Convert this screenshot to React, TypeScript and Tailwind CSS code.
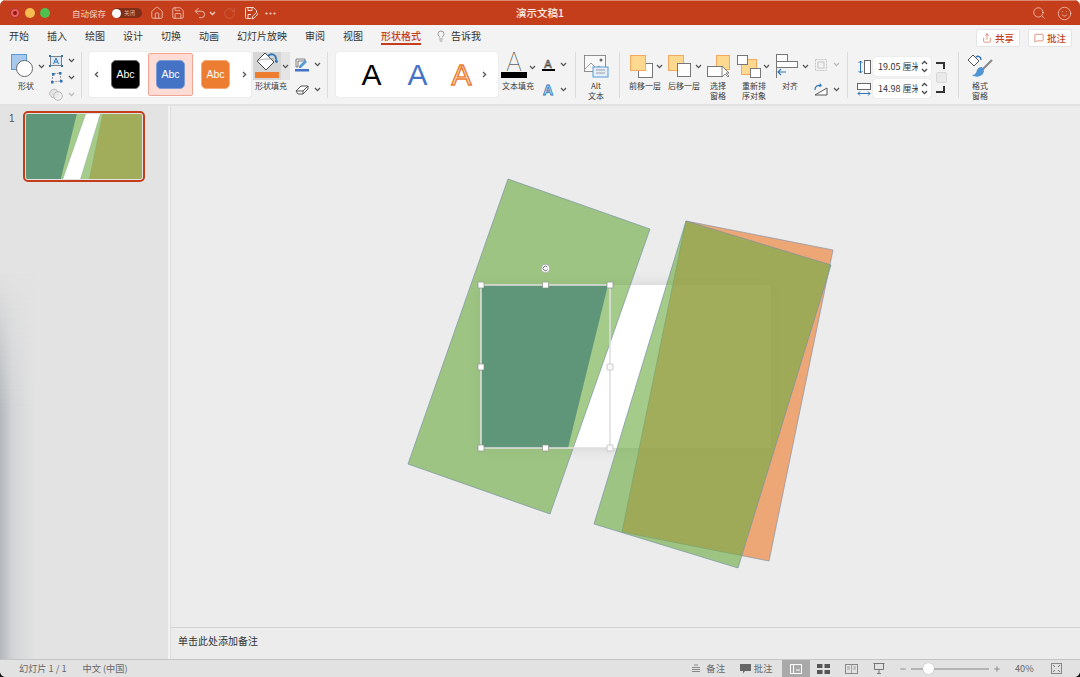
import React from "react";
import { Home, Save, Undo2, RotateCw, Search, Smile, Lightbulb, Share, MessageSquare, Plus, Minus } from "lucide-react";

const Chev = ({ c = "#555", cls = "" }: { c?: string; cls?: string }) => (
  <svg width="7" height="5" viewBox="0 0 7 5" className={"shrink-0 " + cls}><path d="M1 1l2.5 2.6L6 1" fill="none" stroke={c} strokeWidth="1.3" /></svg>
);

const SlideShapes = () => (
  <>
    <polygon points="508,179 650,229 550,514 408,464" fill="#70ad47" fillOpacity=".63" stroke="#7a94a0" strokeWidth=".7" />
    <polygon points="686,221 833,250 769,561 622,532" fill="#ed7d31" fillOpacity=".63" stroke="#8a94a8" strokeWidth=".7" />
    <polygon points="686,221 831,265 738,568 594,524" fill="#70ad47" fillOpacity=".63" stroke="#7a94a0" strokeWidth=".7" />
    <polygon points="481,285 608,285 568,448 481,448" fill="#5f9679" />
  </>
);

const Handle = ({ x, y, dim }: { x: number; y: number; dim?: boolean }) => (
  <rect x={x - 3} y={y - 3} width="6" height="6" rx=".8" fill={dim ? "#f8f8f8" : "#fff"} stroke={dim ? "#b8b8b8" : "#8a8a8a"} strokeWidth=".7" />
);

const Canvas = () => (
  <svg viewBox="171 106 909 521" className="w-full h-full">
    <defs>
      <filter id="sh" x="-10%" y="-15%" width="120%" height="130%">
        <feDropShadow dx="0" dy="0" stdDeviation="7" floodColor="#000" floodOpacity=".12" />
      </filter>
    </defs>
    <rect x="481" y="285" width="290" height="163" fill="#fff" filter="url(#sh)" />
    <SlideShapes />
    <rect x="481" y="285" width="129" height="163" fill="none" stroke="#fff" strokeWidth="1.4" />
    <rect x="481" y="285" width="129" height="163" fill="none" stroke="#9a9a9a" strokeWidth=".5" />
    <line x1="545.5" y1="272" x2="545.5" y2="285" stroke="#aaa" strokeWidth=".7" />
    <circle cx="545.5" cy="268.5" r="4.2" fill="#f4f4f4" stroke="#a8a8a8" strokeWidth=".7" />
    <path d="M547.3 267a2.3 2.3 0 1 0 .2 2.6" fill="none" stroke="#666" strokeWidth=".8" />
    <Handle x={481} y={285} /><Handle x={545.5} y={285} /><Handle x={610} y={285} />
    <Handle x={481} y={367} /><Handle x={610} y={367} dim />
    <Handle x={481} y={448} /><Handle x={545.5} y={448} /><Handle x={610} y={448} dim />
  </svg>
);

const Thumb = () => (
  <svg viewBox="481 285 290 163" preserveAspectRatio="none" className="w-full h-full rounded-[2px] bg-white">
    <SlideShapes />
  </svg>
);

const Sep = ({ cls }: { cls: string }) => <div className={"w-px h-[46px] bg-[#dcdcdc] shrink-0 " + cls} />;

const Big = ({ cls, top, lines, lc = "" }: { cls: string; top: React.ReactNode; lines: string[]; lc?: string }) => (
  <div className={"shrink-0 flex flex-col " + cls}>
    <div className="h-[29px] flex items-center pb-px">{top}</div>
    {lines.map((l) => (
      <div key={l} className={"text-[8px] leading-[10px] text-center text-[#3a3a3a] whitespace-nowrap " + lc}>{l}</div>
    ))}
  </div>
);

const Row = ({ icon, dim }: { icon: React.ReactNode; dim?: boolean }) => (
  <div className="h-[17px] flex items-center gap-[5px]">
    <div className="w-[14px] h-[14px] flex items-center justify-center">{icon}</div>
    <Chev c={dim ? "#bbb" : "#555"} />
  </div>
);

const Abc = ({ cls }: { cls: string }) => (
  <div className={"w-[29px] h-[29px] rounded-[5px] flex items-center justify-center text-[10.5px] text-white font-['Liberation_Sans',sans-serif] " + cls}>Abc</div>
);

const BoxO = ({ x, y, w, h, f = "#fdd98f", s = "#f5a860" }: { x: number; y: number; w: number; h: number; f?: string; s?: string }) => (
  <rect x={x} y={y} width={w} height={h} fill={f} stroke={s} strokeWidth="1" />
);

const Bucket = () => (
  <svg width="26" height="19" viewBox="0 0 26 19">
    <path d="M11 1l9 9-8 8-9-9z" fill="#fff" stroke="#444" strokeWidth="1" />
    <path d="M3 9c3-1 6-2 9-2h8" fill="none" stroke="#888" strokeWidth=".7" />
    <path d="M14 4c3-3 8-2 8 3" fill="none" stroke="#2e75b6" strokeWidth="1.8" />
    <path d="M22 6c1.500 2 2.500 3.500 1.500 4.500s-2.800 0-2.500-1.500z" fill="#2e75b6" />
  </svg>
);

const Field = ({ v }: { v: string }) => (
  <div className="w-[58px] h-[19px] bg-white rounded-[3px] flex items-center pl-[5px] pr-[2px] shadow-[0_0_1px_#bbb]">
    <span className="text-[9px] text-[#333] w-[40px] overflow-hidden whitespace-nowrap">{v}</span>
    <div className="ml-auto flex flex-col gap-[3px] pr-[1px]">
      <Chev cls="rotate-180" c="#444" />
      <Chev c="#444" />
    </div>
  </div>
);

export default function App() {
  return (
    <div className="w-[1080px] h-[677px] bg-[#111] rounded-t-[6px] overflow-hidden font-['Noto_Sans_CJK_SC','Noto_Sans',sans-serif]">
      <div className="w-full h-full flex flex-col rounded-b-[6px] overflow-hidden bg-[#ececec]">
        {/* title bar */}
        <div className="h-[25px] shrink-0 bg-[#c43e1c] border-t border-[#d98a70] grid grid-cols-[1fr_auto_1fr] items-center text-white">
          <div className="flex items-center pl-[10px]">
            <div className="w-[10px] h-[10px] rounded-full bg-[#ee5f5b] border border-[#a33] flex items-center justify-center"><div className="w-[4px] h-[4px] rounded-full bg-[#8c1a14]" /></div>
            <div className="ml-[5px] w-[10px] h-[10px] rounded-full bg-[#f5bd4f]" />
            <div className="ml-[5px] w-[10px] h-[10px] rounded-full bg-[#4fc04f]" />
            <span className="ml-[22px] text-[8.500px] text-[#f3d5c9]">自动保存</span>
            <div className="ml-[6px] w-[30px] h-[10px] rounded-full bg-[#7e2d17] flex items-center">
              <div className="w-[9px] h-[9px] rounded-full bg-white" />
              <span className="ml-[3px] text-[5.500px] text-[#e6bfb0]">关闭</span>
            </div>
            <Home size={14} strokeWidth={1.2} className="ml-[8px] text-[#f6dcd2]" />
            <Save size={14} strokeWidth={1.2} className="ml-[7px] text-[#f6dcd2]" />
            <Undo2 size={14} strokeWidth={1.3} className="ml-[8px] text-[#f6dcd2]" />
            <Chev c="#f3d5c9" cls="ml-[2px]" />
            <RotateCw size={13} strokeWidth={1} className="ml-[7px] text-[#d8745a]" />
            <svg width="14" height="14" viewBox="0 0 14 14" className="ml-[8px] text-[#f6dcd2]" fill="none" stroke="currentColor" strokeWidth="1">
              <path d="M7 12.500H2.500a1 1 0 0 1-1-1v-9a1 1 0 0 1 1-1h7l3 3v2" />
              <path d="M4 1.500v3h4v-3M4 12.500V8.500h3" />
              <path d="M8 13l.5-2.500 4-4 1.500 1.500-4 4z" fill="#c43e1c" />
            </svg>
            <svg width="11" height="3" viewBox="0 0 11 3" className="ml-[7px]"><g fill="#f3d5c9"><circle cx="1.500" cy="1.500" r="1.100" /><circle cx="5.500" cy="1.500" r="1.100" /><circle cx="9.500" cy="1.500" r="1.100" /></g></svg>
          </div>
          <div className="text-[10.500px] text-[#fbeee9] font-medium">演示文稿1</div>
          <div className="flex items-center justify-end pr-[8px]">
            <Search size={14} strokeWidth={1.2} className="text-[#f6dcd2]" />
            <Smile size={15} strokeWidth={1.1} className="ml-[11px] text-[#f6dcd2]" />
          </div>
        </div>

        {/* tabs */}
        <div className="h-[23px] shrink-0 bg-[#f3f3f3] flex items-start pt-[4px] pl-[9px] gap-[18px] text-[10px] leading-[14px] text-[#333]">
          {["开始", "插入", "绘图", "设计", "切换", "动画", "幻灯片放映", "审阅", "视图"].map((t) => (
            <span key={t} className="whitespace-nowrap">{t}</span>
          ))}
          <span className="text-[#c43e1c] border-b-2 border-[#c43e1c] h-[16px] font-medium">形状格式</span>
          <div className="flex items-center -ml-[4px]">
            <Lightbulb size={12} strokeWidth={1.1} className="text-[#555]" />
            <span className="ml-[4px]">告诉我</span>
          </div>
          <div className="ml-auto flex gap-[8px] pr-[8px] text-[#c43e1c] text-[9.500px] font-medium">
            <div className="w-[44px] h-[18px] bg-white border border-[#e4e4e4] rounded-[2px] flex items-center justify-center gap-[3px]">
              <Share size={10} strokeWidth={1.3} /><span>共享</span>
            </div>
            <div className="w-[44px] h-[18px] bg-white border border-[#e4e4e4] rounded-[2px] flex items-center justify-center gap-[3px]">
              <MessageSquare size={10} strokeWidth={1.3} /><span>批注</span>
            </div>
          </div>
        </div>

        {/* ribbon */}
        <div className="h-[58px] shrink-0 bg-[#f3f3f3] flex items-start pt-[4px] border-b-2 border-[#e2e2e2]">
          <Big cls="ml-[11px] w-[34px]" lc="pr-[4px]" lines={["形状"]} top={
            <>
              <svg width="24" height="24" viewBox="0 0 24 24" className="shrink-0">
                <rect x=".5" y=".5" width="15" height="15" fill="#a9c8ee" stroke="#5b9bd5" />
                <circle cx="13.500" cy="14.500" r="8" fill="#fff" stroke="#666" />
              </svg>
              <Chev cls="ml-[3px]" />
            </>
          } />
          <div className="ml-[4px] w-[26px] flex flex-col">
            <Row icon={<svg width="14" height="12" viewBox="0 0 14 12"><rect x="1.500" y="1.500" width="11" height="9" fill="#dce9f7" stroke="#666" strokeWidth=".8" /><path d="M4.500 9L7 3l2.500 6M5.500 7h3" fill="none" stroke="#2e75b6" strokeWidth="1" /><g fill="#2e75b6"><rect width="2" height="2" y="0" x="0" /><rect width="2" height="2" x="12" y="0" /><rect width="2" height="2" x="0" y="10" /><rect width="2" height="2" x="12" y="10" /></g></svg>} />
            <Row icon={<svg width="14" height="13" viewBox="0 0 14 13"><path d="M3 11L4 3l7-1 1 8z" fill="none" stroke="#777" strokeWidth=".8" strokeDasharray="2 1" /><g fill="#2e75b6"><rect x="2" y="10" width="2.500" height="2.500" /><rect x="3" y="2" width="2.500" height="2.500" /><rect x="10" y="1" width="2.500" height="2.500" /><rect x="11" y="9" width="2.500" height="2.500" /></g></svg>} />
            <Row dim icon={<svg width="14" height="13" viewBox="0 0 14 13"><circle cx="5" cy="5.500" r="4.300" fill="#e4e4e4" stroke="#bbb" /><circle cx="9" cy="8" r="4.300" fill="#eee" fillOpacity=".7" stroke="#bbb" /></svg>} />
          </div>
          <Sep cls="ml-[6px]" />

          <div className="ml-[7px] w-[162px] h-[45px] bg-white rounded-[2px] shadow-[0_0_1px_#bbb] flex items-center">
            <Chev cls="ml-[4px] rotate-90" />
            <Abc cls="ml-[11px] bg-black border border-[#666]" />
            <div className="ml-[8px] w-[45px] h-[43px] bg-[#fcdcd5] border border-[#f3a594] rounded-[2px] flex items-center justify-center">
              <Abc cls="bg-[#4472c4] border border-[#7c9bd6]" />
            </div>
            <Abc cls="ml-[8px] bg-[#ed7d31] border border-[#f4ab7c]" />
            <Chev cls="ml-[11px] -rotate-90" />
          </div>

          <div className="ml-[2px] w-[37px] shrink-0 flex flex-col">
            <div className="h-[29px] flex">
              <div className="w-[28px] h-[28px] bg-[#d6d6d6] flex flex-col items-center">
                <Bucket />
                <div className="w-[24px] h-[6px] bg-[#ed7d31] mt-[1px]" />
              </div>
              <div className="w-[9px] h-[28px] bg-[#e4e4e4] flex items-center justify-center"><Chev /></div>
            </div>
            <div className="text-[8px] leading-[10px] text-[#3a3a3a] pl-[2px] whitespace-nowrap">形状填充</div>
          </div>
          <div className="ml-[5px] w-[26px] flex flex-col pt-[4px] gap-[8px]">
            <Row icon={<svg width="14" height="14" viewBox="0 0 14 14"><path d="M1 1h9v2H3v6H1z" fill="none" stroke="#666" strokeWidth=".8" /><path d="M4 8l6-6 2 2-6 6H4z" fill="#5b9bd5" /><rect x="0" y="11" width="14" height="2.500" fill="#4472c4" /></svg>} />
            <Row icon={<svg width="14" height="12" viewBox="0 0 14 12"><path d="M1 7l5-5h7v3l-5 5H3z" fill="#fff" stroke="#555" /><path d="M1 7h7v3M8 7l5-5" fill="none" stroke="#555" /></svg>} />
          </div>
          <Sep cls="ml-[6px]" />

          <div className="ml-[8px] w-[162px] h-[45px] bg-white rounded-[2px] shadow-[0_0_1px_#bbb] flex items-center font-['Liberation_Sans',sans-serif] text-[30px] leading-none">
            <span className="ml-[25px] w-[21px] text-center text-black">A</span>
            <span className="ml-[25px] w-[21px] text-center text-[#4472c4]">A</span>
            <span className="ml-[23px] w-[21px] text-center text-[#fbe5d6] [-webkit-text-stroke:1.4px_#ed7d31]">A</span>
            <Chev cls="ml-[9px] -rotate-90" />
          </div>

          <div className="ml-[3px] w-[37px] shrink-0 flex flex-col">
            <div className="h-[29px] flex items-start">
              <div className="w-[26px] flex flex-col items-center pt-[1px]">
                <span className="font-['Inter',sans-serif] font-thin text-[25px] leading-[19px] text-[#222]">A</span>
                <div className="w-[26px] h-[6px] bg-black" />
              </div>
              <Chev cls="ml-[2px] mt-[13px]" />
            </div>
            <div className="text-[8px] leading-[10px] text-[#3a3a3a] pl-px whitespace-nowrap">文本填充</div>
          </div>
          <div className="ml-[3px] w-[27px] flex flex-col pt-[4px] gap-[8px]">
            <Row icon={<div className="flex flex-col items-center"><span className="font-['Liberation_Sans',sans-serif] text-[11px] leading-[10px] text-[#ddd] [-webkit-text-stroke:0.6px_#333]">A</span><div className="w-[13px] h-[2px] bg-black" /></div>} />
            <Row icon={<span className="font-['Liberation_Sans',sans-serif] font-bold text-[14px] leading-none text-[#cfe2f3] [-webkit-text-stroke:0.8px_#2e75b6]">A</span>} />
          </div>
          <Sep cls="ml-[7px]" />

          <Big cls="ml-[2px] w-[36px]" lines={["Alt", "文本"]} top={
            <svg width="26" height="24" viewBox="0 0 26 24" className="ml-[6px] mt-[2px]">
              <rect x=".5" y=".5" width="21" height="16" fill="#f8f8f8" stroke="#777" strokeWidth=".8" />
              <path d="M1 14l6-6 5 5 3-2 5 4" fill="none" stroke="#888" strokeWidth=".8" />
              <circle cx="17" cy="5" r="1.500" fill="#666" />
              <rect x="9" y="12" width="15" height="10" fill="#e3eefa" stroke="#5b9bd5" />
              <path d="M12 15h9M12 18h9" stroke="#888" strokeWidth=".8" />
            </svg>
          } />
          <Sep cls="ml-[5px]" />

          <Big cls="ml-[7px] w-[36px]" lines={["前移一层"]} top={
            <>
              <svg width="23" height="23" viewBox="0 0 23 23" className="ml-[3px] shrink-0">
                <rect x="8.500" y="8.500" width="14" height="14" fill="#fff" stroke="#777" />
                <BoxO x={.5} y={.5} w={15} h={15} />
              </svg>
              <Chev cls="ml-[3px]" />
            </>
          } />
          <Big cls="ml-[3px] w-[36px]" lines={["后移一层"]} top={
            <>
              <svg width="23" height="23" viewBox="0 0 23 23" className="ml-[2px] shrink-0">
                <BoxO x={.5} y={.5} w={15} h={15} />
                <rect x="9.500" y="8.500" width="13" height="13" fill="#fff" stroke="#777" />
              </svg>
              <Chev cls="ml-[4px]" />
            </>
          } />
          <Big cls="ml-[3px] w-[26px]" lines={["选择", "窗格"]} top={
            <svg width="24" height="23" viewBox="0 0 24 23" className="ml-[2px] shrink-0">
              <BoxO x={9.5} y={.5} w={13} h={14} />
              <rect x=".5" y="11.500" width="15" height="10" fill="#fff" stroke="#777" />
              <path d="M15 11v11l3-3 3 3 1-1-3-3h3z" fill="#fff" stroke="#666" strokeWidth=".8" />
            </svg>
          } />
          <Big cls="ml-[5px] w-[36px]" lines={["重新排", "序对象"]} top={
            <>
              <svg width="24" height="23" viewBox="0 0 24 23" className="ml-px shrink-0">
                <BoxO x={4.5} y={4.5} w={15} h={15} />
                <rect x=".5" y=".5" width="10" height="9" fill="#fff" stroke="#777" />
                <rect x="13.500" y="13.500" width="10" height="9" fill="#fff" stroke="#777" />
              </svg>
              <Chev cls="ml-[2px]" />
            </>
          } />
          <Big cls="ml-[2px] w-[38px]" lc="pr-[6px]" lines={["对齐"]} top={
            <>
              <svg width="24" height="24" viewBox="0 0 24 24" className="ml-px shrink-0">
                <path d="M1.500 0v24" stroke="#777" />
                <rect x="1.500" y=".5" width="11" height="7" fill="#fff" stroke="#777" />
                <rect x="1.500" y="7.500" width="21" height="6" fill="#fff" stroke="#777" />
                <path d="M11 18H3M6 15l-3 3 3 3" fill="none" stroke="#2e75b6" strokeWidth="1.100" />
              </svg>
              <Chev cls="ml-[3px]" />
            </>
          } />
          <div className="ml-[2px] w-[26px] flex flex-col pt-[4px] gap-[8px]">
            <Row dim icon={<svg width="14" height="14" viewBox="0 0 14 14"><rect x="1.500" y="1.500" width="11" height="11" fill="none" stroke="#c4c4c4" strokeDasharray="2 1" /><rect x="4" y="4" width="6" height="6" fill="none" stroke="#c4c4c4" /></svg>} />
            <Row icon={<svg width="14" height="13" viewBox="0 0 14 13"><path d="M1 12L13 5v7z" fill="#fff" stroke="#555" /><path d="M1 7a4 4 0 0 1 6-4" fill="none" stroke="#2e75b6" strokeWidth="1.200" /><path d="M6 0l2 3-3 1z" fill="#2e75b6" /></svg>} />
          </div>
          <Sep cls="ml-[7px]" />

          <div className="ml-[9px] w-[92px] shrink-0 flex h-[46px]">
            <div className="flex flex-col w-[16px] pt-[8px] gap-[9px]">
              <svg width="14" height="14" viewBox="0 0 14 14"><rect x="7.500" y=".5" width="6" height="13" fill="#fff" stroke="#666" /><path d="M3.500 1v12M1.500 3l2-2 2 2M1.500 11l2 2 2-2" fill="none" stroke="#2e75b6" /></svg>
              <svg width="14" height="14" viewBox="0 0 14 14"><rect x=".5" y=".5" width="13" height="6" fill="#fff" stroke="#666" /><path d="M1 10.500h12M3 8.500l-2 2 2 2M11 8.500l2 2-2 2" fill="none" stroke="#2e75b6" /></svg>
            </div>
            <div className="flex flex-col pt-[5px] gap-[3px]">
              <Field v="19.05 厘米" />
              <Field v="14.98 厘米" />
            </div>
            <div className="ml-[5px] flex flex-col items-start pt-[10px]">
              <div className="w-[9px] h-[7px] border-t-2 border-r-2 border-[#333]" />
              <div className="w-[11px] h-[11px] my-[3px] bg-[#e9e9e9] border border-[#d8d8d8] rounded-[2px]" />
              <div className="w-[9px] h-[7px] border-b-2 border-r-2 border-[#333]" />
            </div>
          </div>
          <Sep cls="ml-[9px]" />

          <Big cls="ml-[7px] w-[28px]" lines={["格式", "窗格"]} top={
            <svg width="26" height="24" viewBox="0 0 26 24" className="ml-[1px] shrink-0">
              <path d="M6 1l6 6-5 5-6-6z" fill="#fff" stroke="#555" />
              <path d="M9 3c2-1.500 5-.5 5 3" fill="none" stroke="#2e75b6" strokeWidth="1.500" />
              <path d="M25 6L14 17" stroke="#888" strokeWidth="2.200" />
              <path d="M15 13c-3 0-5 2-5.500 4.500S7 21 5 21c4 3 11 2 12-4z" fill="#4f94d4" />
            </svg>
          } />
        </div>

        {/* main */}
        <div className="flex-1 min-h-0 flex">
          <div className="relative w-[168px] shrink-0 bg-[#e3e3e3] flex items-start pt-[5px] pl-[9px]">
            <div className="w-[14px] text-[10px] leading-[16px] text-[#555] font-['Liberation_Sans',sans-serif]">1</div>
            <div className="w-[122px] h-[71px] border-2 border-[#c43e1c] rounded-[5px] p-px overflow-hidden"><Thumb /></div>
            <div className="absolute left-0 bottom-0 top-0 w-[36px] bg-[linear-gradient(to_right,#b4b8bc,#d2d4d6_35%,#e3e3e3)] [mask-image:linear-gradient(to_bottom,transparent_30%,black_55%)]" />
          </div>
          <div className="w-[3px] shrink-0 bg-[#f2f2f2] border-r border-[#dedede]" />
          <div className="flex-1 min-w-0 flex flex-col">
            <div className="flex-1 min-h-0"><Canvas /></div>
            <div className="h-[32px] shrink-0 border-t border-[#d2d2d2] flex items-center pl-[7px] pb-[6px] text-[10px] text-[#333]">单击此处添加备注</div>
          </div>
        </div>

        {/* status bar */}
        <div className="h-[18px] shrink-0 bg-[#e2e2e2] border-t border-[#c4c4c4] flex items-center text-[9.200px] text-[#666] pl-[19px]">
          <span>幻灯片 1 / 1</span>
          <span className="ml-[16px]">中文 (中国)</span>
          <svg width="10" height="9" viewBox="0 0 10 9" className="ml-auto"><path d="M3 1h4M1 3.500h8M1 5.500h8M1 7.500h8" stroke="#888" /></svg>
          <span className="ml-[5px] mr-[14px] tracking-[0.5px]">备注</span>
          <svg width="11" height="10" viewBox="0 0 11 10"><path d="M0 0h11v7H5L3 9.500V7H0z" fill="#666" /></svg>
          <span className="ml-[3px] mr-[9px] tracking-[0.5px]">批注</span>
          <div className="w-[28px] h-full bg-[#a9a9a9] flex items-center justify-center">
            <svg width="12" height="10" viewBox="0 0 12 10"><rect x=".5" y=".5" width="11" height="9" fill="none" stroke="#fff" /><path d="M3.500 0v10" stroke="#fff" /><path d="M6 6h4" stroke="#fff" /></svg>
          </div>
          <svg width="13" height="10" viewBox="0 0 13 10" className="ml-[7px]"><g fill="#555"><rect width="5.500" height="4" /><rect x="7.500" width="5.500" height="4" /><rect y="6" width="5.500" height="4" /><rect x="7.500" y="6" width="5.500" height="4" /></g></svg>
          <svg width="13" height="10" viewBox="0 0 13 10" className="ml-[15px]"><rect x=".5" y=".5" width="12" height="9" fill="none" stroke="#888" /><path d="M6.500 0v10M2 3h3M2 5h3M8 3h3M8 5h3" stroke="#888" strokeWidth=".7" /></svg>
          <svg width="12" height="11" viewBox="0 0 12 11" className="ml-[15px]"><path d="M.5.500h11M1.500.5v6h9v-6" fill="none" stroke="#777" /><path d="M6 7v3M4 10.500h4" stroke="#777" /></svg>
          <Minus size={8} strokeWidth={2} className="ml-[14px] text-[#666]" />
          <div className="ml-[4px] w-[78px] h-[2px] bg-[#b4b4b4] flex items-center">
            <div className="ml-[12px] w-[11px] h-[11px] rounded-full bg-white shadow-[0_0_1px_#999]" />
          </div>
          <Plus size={8} strokeWidth={2} className="ml-[4px] text-[#666]" />
          <span className="ml-[14px] w-[21px] text-[#666]">40%</span>
          <svg width="11" height="11" viewBox="0 0 11 11" className="ml-[15px] mr-[18px]"><rect x=".5" y=".5" width="10" height="10" fill="none" stroke="#888" /><path d="M2 2l2 2M9 2L7 4M2 9l2-2M9 9L7 7" stroke="#777" /></svg>
        </div>
      </div>
    </div>
  );
}
